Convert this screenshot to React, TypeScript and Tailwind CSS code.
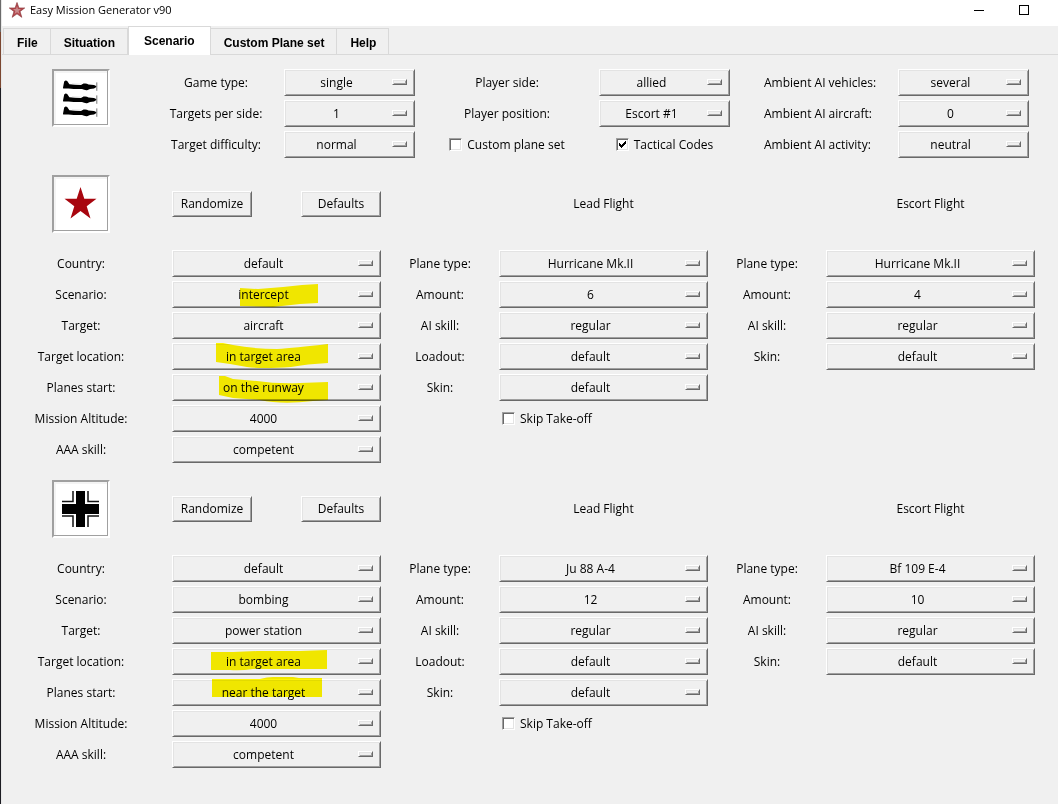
import { useId, useState } from 'react';

type Field = {
  label: string;
  value: string;
  options?: string[];
  mark?: string;
};

type Team = {
  name: string;
  icon: React.ReactNode;
  mission: Field[];
  lead: Field[];
  escort: Field[];
};

const tabs = ['File', 'Situation', 'Scenario', 'Custom Plane set', 'Help'];

// highlighter strokes, drawn in the 209x27 space of a wide menu
const marks = {
  intercept: 'M68 7 L86 8 L111 6 L130 4 L146 3 V22 L128 23 L101 26 L68 25 Z',
  location: 'M44 0 H51 L61 2 Q83 6 105 6 Q122 5 156 1 V20 Q135 21 119 24 Q90 26 75 24 Q60 21 44 19 Z',
  runway: 'M47 2 H53 L61 5 L85 7 Q105 10 128 9 L156 8 V26 L141 27 Q110 31 88 26 L61 24 L47 21 Z',
  area: 'M39 4 H61 L85 3 H128 L155 2 V21 H81 Q68 23 58 22 H39 Z',
  near: 'M40 0 H88 Q95 -2 101 -2 H121 L127 -1 H150 V18 H40 Z',
};

const teams: Team[] = [
  {
    name: 'Allied',
    icon: <RedStar />,
    mission: [
      { label: 'Country:', value: 'default' },
      { label: 'Scenario:', value: 'intercept', mark: marks.intercept },
      { label: 'Target:', value: 'aircraft' },
      { label: 'Target location:', value: 'in target area', mark: marks.location },
      { label: 'Planes start:', value: 'on the runway', mark: marks.runway },
      { label: 'Mission Altitude:', value: '4000' },
      { label: 'AAA skill:', value: 'competent' },
    ],
    lead: [
      { label: 'Plane type:', value: 'Hurricane Mk.II' },
      { label: 'Amount:', value: '6' },
      { label: 'AI skill:', value: 'regular' },
      { label: 'Loadout:', value: 'default' },
      { label: 'Skin:', value: 'default' },
    ],
    escort: [
      { label: 'Plane type:', value: 'Hurricane Mk.II' },
      { label: 'Amount:', value: '4' },
      { label: 'AI skill:', value: 'regular' },
      { label: 'Skin:', value: 'default' },
    ],
  },
  {
    name: 'Axis',
    icon: <Cross />,
    mission: [
      { label: 'Country:', value: 'default' },
      { label: 'Scenario:', value: 'bombing' },
      { label: 'Target:', value: 'power station' },
      { label: 'Target location:', value: 'in target area', mark: marks.area },
      { label: 'Planes start:', value: 'near the target', mark: marks.near },
      { label: 'Mission Altitude:', value: '4000' },
      { label: 'AAA skill:', value: 'competent' },
    ],
    lead: [
      { label: 'Plane type:', value: 'Ju 88 A-4' },
      { label: 'Amount:', value: '12' },
      { label: 'AI skill:', value: 'regular' },
      { label: 'Loadout:', value: 'default' },
      { label: 'Skin:', value: 'default' },
    ],
    escort: [
      { label: 'Plane type:', value: 'Bf 109 E-4' },
      { label: 'Amount:', value: '10' },
      { label: 'AI skill:', value: 'regular' },
      { label: 'Skin:', value: 'default' },
    ],
  },
];

function RedStar() {
  return (
    <svg viewBox="0 0 54 54" className="w-full h-full">
      <path d="M26.5 10 L30.3 21.8 H42.5 L32.7 29.2 L36.5 41.5 L26.5 34 L16.5 41.5 L20.3 29.2 L10.5 21.8 H22.7 Z" fill="#a8060f" />
    </svg>
  );
}

function Cross() {
  return (
    <svg viewBox="0 0 54 54" className="w-full h-full">
      <path d="M22 9 H31 V22 H45 V32 H31 V45 H22 V32 H8 V22 H22 Z" fill="#000" />
      <path
        d="M19 9 V19.5 H8 M34 9 V19.5 H45 M19 45 V34 H8 M34 45 V34 H45"
        fill="none"
        stroke="#111"
        strokeWidth="1.5"
      />
    </svg>
  );
}

function Planes() {
  return (
    <svg viewBox="0 0 54 54" className="w-full h-full">
      {[9, 22, 35].map((y) => (
        <g key={y} transform={`translate(9 ${y})`}>
          <path
            d="M0 7.8 L0.5 5 L1.2 1.4 Q2.6 0 4.2 1 L6.4 4.2 Q12 5 18 5 L20.5 3.6 Q23.5 3 25.5 4.4 L31 5 Q33 5.6 33.6 6.6 Q33 7.8 31 8.4 L27 8.9 L24 10.2 Q21.5 10.4 19 9.1 Q11 9.2 5.5 8.6 L0.2 8.4 Z"
            fill="#000"
          />
          <path d="M9 3.6 L18 4" stroke="#e2e2e2" strokeWidth="0.7" />
          <path d="M33.8 2.4 V10.8" stroke="#666" strokeWidth="0.9" />
        </g>
      ))}
    </svg>
  );
}

function Badge({ children }: { children: React.ReactNode }) {
  return (
    <div className="w-[58px] h-[58px] bg-white border-2 border-t-[#a0a0a0] border-l-[#a0a0a0] border-b-white border-r-white shadow-[inset_-1px_-1px_0_#a0a0a0,inset_2px_2px_0_#f4f4f4]">
      {children}
    </div>
  );
}

function Menu({ id, field }: { id: string; field: Field }) {
  return (
    <div className="relative h-[27px]">
      <select
        id={id}
        defaultValue={field.value}
        className="appearance-none block w-full h-full pr-[26px] text-center [text-align-last:center] leading-4 bg-[#f0f0f0] border border-t-white border-l-white border-b-[#696969] border-r-[#696969] shadow-[inset_1px_1px_0_#e3e3e3,inset_-1px_-1px_0_#a0a0a0] outline-none"
      >
        {(field.options ?? [field.value]).map((o) => (
          <option key={o}>{o}</option>
        ))}
      </select>
      <span className="absolute right-2 top-[10px] w-[15px] h-[6px] pointer-events-none border border-t-white border-l-white border-b-[#696969] border-r-[#696969] shadow-[inset_1px_1px_0_#e3e3e3,inset_-1px_-1px_0_#a0a0a0]" />
      {field.mark && (
        <svg
          viewBox="0 0 209 27"
          className="absolute inset-x-0 top-0 mx-auto w-[209px] h-[27px] overflow-visible pointer-events-none mix-blend-multiply"
        >
          <path d={field.mark} fill="#fff500" />
        </svg>
      )}
    </div>
  );
}

function FieldRow({ field, align = 'text-center' }: { field: Field; align?: string }) {
  const id = useId();
  return (
    <>
      <label htmlFor={id} className={`${align} self-center whitespace-nowrap`}>
        {field.label}
      </label>
      <Menu id={id} field={field} />
    </>
  );
}

function CheckBox({ label, checked = false }: { label: string; checked?: boolean }) {
  const [on, setOn] = useState(checked);
  return (
    <label className="h-[27px] inline-flex items-center gap-[5px] whitespace-nowrap">
      <span className="relative w-[13px] h-[13px] shrink-0">
        <input
          type="checkbox"
          checked={on}
          onChange={() => setOn(!on)}
          className="appearance-none block w-[13px] h-[13px] bg-white border border-t-[#a0a0a0] border-l-[#a0a0a0] border-b-white border-r-white shadow-[inset_1px_1px_0_#696969,inset_-1px_-1px_0_#e3e3e3]"
        />
        {on && (
          <svg viewBox="0 0 13 13" className="absolute inset-0 pointer-events-none" shapeRendering="crispEdges">
            <path d="M3 5 H4 V6 H5 V7 H6 V6 H7 V5 H8 V4 H9 V3 H10 V6 H9 V7 H8 V8 H7 V9 H6 V10 H5 V9 H4 V8 H3 Z" fill="#000" />
          </svg>
        )}
      </span>
      {label}
    </label>
  );
}

function PushButton({ children }: { children: React.ReactNode }) {
  return (
    <button
      type="button"
      className="w-20 h-[26px] leading-4 bg-[#f0f0f0] border border-t-white border-l-white border-b-[#696969] border-r-[#696969] shadow-[inset_1px_1px_0_#e3e3e3,inset_-1px_-1px_0_#a0a0a0]"
    >
      {children}
    </button>
  );
}

function TeamSection({ team }: { team: Team }) {
  return (
    <section
      aria-label={team.name}
      className="grid grid-cols-[158fr_209fr_94fr_209fr_94fr_209fr] gap-x-3 gap-y-[17px] pr-[23px]"
    >
      <div className="flex justify-center">
        <Badge>{team.icon}</Badge>
      </div>
      <div className="flex items-center justify-between">
        <PushButton>Randomize</PushButton>
        <PushButton>Defaults</PushButton>
      </div>
      <h2 className="col-start-4 self-center text-center">Lead Flight</h2>
      <h2 className="col-start-6 self-center text-center">Escort Flight</h2>

      <div className="col-start-1 col-span-2 grid grid-cols-subgrid gap-y-1 content-start">
        {team.mission.map((f) => (
          <FieldRow key={f.label} field={f} />
        ))}
      </div>
      <div className="col-span-2 grid grid-cols-subgrid gap-y-1 content-start">
        {team.lead.map((f) => (
          <FieldRow key={f.label} field={f} />
        ))}
        <div className="col-start-2 pl-[3px]">
          <CheckBox label="Skip Take-off" />
        </div>
      </div>
      <div className="col-span-2 grid grid-cols-subgrid gap-y-1 content-start">
        {team.escort.map((f) => (
          <FieldRow key={f.label} field={f} />
        ))}
      </div>
    </section>
  );
}

function GeneralSection() {
  return (
    <section
      aria-label="General"
      className="grid grid-cols-[146fr_112fr_131fr_160fr_131fr_144fr_131fr] gap-y-1 gap-x-3 pr-[29px]"
    >
      <div className="row-span-3 flex justify-center pl-3">
        <Badge>
          <Planes />
        </Badge>
      </div>
      <FieldRow field={{ label: 'Game type:', value: 'single' }} />
      <FieldRow field={{ label: 'Player side:', value: 'allied' }} />
      <FieldRow field={{ label: 'Ambient AI vehicles:', value: 'several' }} align="pl-[22px]" />

      <FieldRow field={{ label: 'Targets per side:', value: '1' }} />
      <FieldRow field={{ label: 'Player position:', value: 'Escort #1' }} />
      <FieldRow field={{ label: 'Ambient AI aircraft:', value: '0' }} align="pl-[22px]" />

      <FieldRow field={{ label: 'Target difficulty:', value: 'normal' }} />
      <div className="flex justify-center">
        <CheckBox label="Custom plane set" />
      </div>
      <div className="flex justify-center">
        <CheckBox label="Tactical Codes" checked />
      </div>
      <FieldRow field={{ label: 'Ambient AI activity:', value: 'neutral' }} align="pl-[22px]" />
    </section>
  );
}

function TitleBar() {
  return (
    <header className="h-[26px] bg-white flex items-start justify-between">
      <div className="flex items-center gap-[5px] pl-[7px] pt-[2px]">
        <svg viewBox="0 0 16 16" className="w-4 h-4">
          <path d="M8 0.5 L9.9 6 H15.7 L11 9.5 L12.8 15.3 L8 11.8 L3.2 15.3 L5 9.5 L0.3 6 H6.1 Z" fill="#b5474c" stroke="#8d3a3e" strokeWidth="0.7" />
          <path d="M8 4 L9 7 H12 L9.6 9 L10.5 12 L8 10.2 L5.5 12 L6.4 9 L4 7 H7 Z" fill="#c98a8c" />
        </svg>
        <h1 className="text-[11px] leading-4">Easy Mission Generator v90</h1>
      </div>
      <div className="flex pr-[12px]">
        <button type="button" aria-label="Minimize" className="w-[45px] h-5 flex items-center justify-center">
          <span className="w-[10px] h-px bg-black" />
        </button>
        <button type="button" aria-label="Maximize" className="w-[45px] h-5 flex items-center justify-center">
          <span className="w-[10px] h-[10px] border border-black" />
        </button>
      </div>
    </header>
  );
}

function TabBar({ active, onSelect }: { active: string; onSelect: (t: string) => void }) {
  return (
    <nav
      role="tablist"
      className="flex items-end h-[29px] pl-px border-b border-[#d9d9d9] font-['Liberation_Sans',Arial,sans-serif] font-bold"
    >
      {tabs.map((t) => (
        <button
          key={t}
          type="button"
          role="tab"
          aria-selected={t === active}
          onClick={() => onSelect(t)}
          className={
            t === active
              ? 'h-[29px] px-[15px] pb-[1px] -mb-px bg-white border border-b-0 border-[#d9d9d9]'
              : 'h-[26px] pl-[13px] pr-3 pt-[2px] border-t border-r first:border-l border-[#d9d9d9]'
          }
        >
          {t}
        </button>
      ))}
    </nav>
  );
}

export default function App() {
  const [active, setActive] = useState('Scenario');

  return (
    <div className="flex min-h-screen bg-[#f0f0f0] text-black text-[12px] leading-4 font-['Open_Sans','Noto_Sans',sans-serif]">
      <div className="w-px shrink-0 flex flex-col">
        <div className="h-8 bg-[#6b6b6b]" />
        <div className="h-14 bg-[#7a4630]" />
        <div className="flex-1 bg-[#1c1c22]" />
      </div>
      <div className="flex-1 min-w-0 border-l border-[#e8e8e8]">
        <TitleBar />
        <TabBar active={active} onSelect={setActive} />
        <main className="pt-[14px] pb-8 flex flex-col gap-[17px]">
          <GeneralSection />
          {teams.map((t) => (
            <TeamSection key={t.name} team={t} />
          ))}
        </main>
      </div>
    </div>
  );
}
